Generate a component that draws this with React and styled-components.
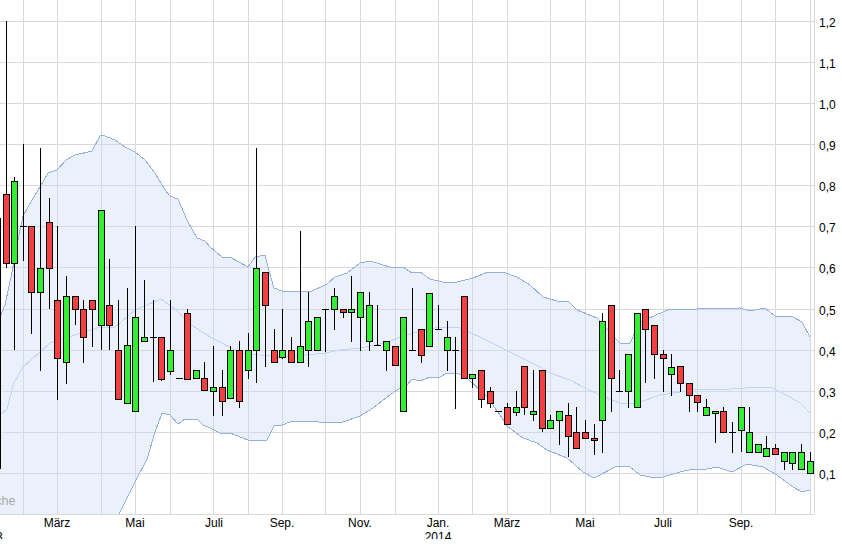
import React from 'react';
import styled, { createGlobalStyle } from 'styled-components';

const GlobalStyle = createGlobalStyle`
  html, body {
    margin: 0;
    padding: 0;
    background: #fff;
    overflow: hidden;
  }
`;

const Page = styled.div`
  width: 842px;
  height: 544px;
  background: #fff;
  overflow: hidden;
`;

const ChartSvg = styled.svg`
  display: block;
  font-family: "Liberation Sans", Arial, sans-serif;
  font-size: 12px;
`;

const GridLine = styled.line`
  stroke: #d9d9d9;
  stroke-width: 1;
  shape-rendering: crispEdges;
`;

const BandFill = styled.path`
  fill: #cddcf5;
  fill-opacity: 0.4;
  stroke: none;
`;

const BandLine = styled.polyline`
  fill: none;
  stroke: ${props => (props.$mid ? '#bed4f8' : '#95afe2')};
  stroke-width: 1;
  shape-rendering: crispEdges;
`;

const Wick = styled.line`
  stroke: #000;
  stroke-width: 1;
  shape-rendering: crispEdges;
`;

const Body = styled.rect`
  fill: ${props => (props.$up ? '#33ee33' : '#f44040')};
  stroke: #000;
  stroke-width: 1;
  shape-rendering: crispEdges;
`;

const AxisLabel = styled.text`
  fill: #000;
`;

const Watermark = styled.text`
  fill: #a8a8a8;
  font-size: 12.5px;
`;

const PLOT_RIGHT = 814;
const PLOT_BOTTOM = 514;

const hLines = [21, 62, 103, 144, 185, 226, 267, 309, 350, 391, 432, 473];
const vLines = [23, 57, 101, 135, 170, 213, 248, 282, 325, 360, 395, 438, 472, 507, 550, 585, 619, 663, 697, 741, 775, 810];

const yLabels = ['1,2', '1,1', '1,0', '0,9', '0,8', '0,7', '0,6', '0,5', '0,4', '0,3', '0,2', '0,1'];

const xLabels = [
  ['März', 57], ['Mai', 135], ['Juli', 214], ['Sep.', 282], ['Nov.', 360],
  ['Jan.', 438], ['März', 507], ['Mai', 585], ['Juli', 663], ['Sep.', 741],
];

const upper = [
  [0, 317], [5, 305], [12, 272], [18, 240], [23, 216], [32, 200], [40, 187], [48, 173], [57, 170], [66, 160],
  [75, 155], [92, 151], [100, 136], [102, 135], [115, 140], [125, 147], [135, 152], [145, 160], [155, 173],
  [165, 190], [170, 196], [178, 199], [187, 220], [197, 238], [205, 241], [210, 247], [222, 257], [230, 257],
  [248, 267], [255, 257], [265, 255], [268, 267], [274, 288], [282, 291], [310, 292], [327, 284], [335, 277],
  [347, 273], [360, 263], [370, 261], [393, 268], [403, 267], [412, 273], [420, 272], [430, 279], [443, 282],
  [457, 282], [473, 278], [488, 272], [503, 272], [517, 277], [530, 285], [543, 297], [557, 301], [568, 301],
  [577, 310], [597, 318], [617, 340], [620, 343], [630, 343], [640, 322], [663, 312], [670, 309], [697, 309],
  [740, 308], [750, 311], [765, 308], [775, 316], [793, 317], [802, 322], [810, 337],
];

const lower = [
  [119, 514], [135, 482], [147, 459], [155, 432], [162, 413], [170, 415], [178, 424], [185, 419], [197, 419],
  [203, 425], [210, 428], [220, 433], [230, 433], [248, 440], [267, 440], [274, 426], [282, 425], [290, 422],
  [310, 421], [327, 423], [343, 422], [360, 416], [373, 408], [387, 397], [397, 390], [407, 385], [412, 379],
  [420, 381], [430, 377], [440, 377], [447, 373], [457, 373], [467, 378], [487, 397], [500, 415], [508, 427],
  [523, 438], [537, 443], [547, 450], [567, 458], [583, 472], [594, 478], [617, 466], [630, 467], [640, 475],
  [650, 477], [663, 477], [680, 472], [693, 469], [707, 469], [717, 467], [732, 472], [747, 464], [763, 467],
  [777, 475], [793, 487], [802, 492], [810, 490],
];

const middle = [
  [0, 415], [7, 409], [13, 385], [23, 367], [40, 352], [50, 343], [75, 335], [100, 327], [115, 327], [135, 310],
  [161, 299], [175, 309], [190, 324], [210, 337], [222, 343], [240, 353], [280, 357], [305, 355], [325, 353],
  [340, 350], [360, 348], [385, 343], [400, 337], [420, 331], [440, 327], [460, 328], [480, 337], [500, 347],
  [520, 357], [540, 367], [550, 373], [570, 380], [585, 388], [600, 395], [620, 403], [630, 404], [640, 402],
  [660, 395], [680, 392], [697, 389], [730, 389], [745, 388], [770, 387], [780, 392], [790, 397], [800, 403],
  [810, 413],
];

// x, wick top, wick bottom, body top, body bottom, up
const candles = [
  [0, 218, 469, null, null],
  [6, 21, 268, 194, 263, false],
  [14, 177, 350, 181, 263, true],
  [23, 144, 260, 226, 226, null],
  [31, 226, 334, 226, 292, false],
  [40, 148, 371, 268, 292, true],
  [49, 198, 309, 222, 268, false],
  [57, 226, 400, 300, 358, false],
  [66, 276, 384, 296, 362, true],
  [75, 296, 325, 296, 309, false],
  [83, 300, 363, 309, 337, false],
  [92, 300, 347, 300, 309, false],
  [101, 210, 350, 210, 325, true],
  [109, 259, 350, 305, 325, false],
  [118, 300, 399, 350, 399, false],
  [127, 288, 403, 345, 403, true],
  [135, 226, 411, 317, 411, true],
  [144, 280, 341, 337, 341, true],
  [153, 300, 381, 337, 337, null],
  [161, 337, 381, 337, 379, false],
  [170, 300, 375, 350, 371, true],
  [179, 378, 378, 378, 378, null],
  [187, 309, 379, 313, 379, false],
  [196, 370, 378, 370, 378, true],
  [204, 362, 390, 378, 390, false],
  [213, 346, 416, 387, 391, true],
  [222, 370, 416, 387, 401, false],
  [230, 346, 398, 350, 398, true],
  [239, 341, 408, 350, 401, false],
  [248, 333, 379, 350, 370, true],
  [256, 148, 383, 268, 350, true],
  [265, 272, 367, 272, 305, false],
  [274, 329, 362, 350, 362, false],
  [282, 309, 359, 350, 357, true],
  [291, 337, 362, 350, 362, false],
  [300, 231, 362, 346, 362, true],
  [308, 292, 367, 321, 350, true],
  [317, 317, 350, 317, 350, true],
  [325, 309, 351, 309, 309, null],
  [334, 288, 330, 296, 309, true],
  [343, 309, 318, 309, 312, false],
  [351, 276, 342, 309, 312, true],
  [360, 292, 351, 292, 317, true],
  [369, 292, 351, 305, 341, true],
  [377, 305, 345, 345, 345, null],
  [386, 341, 371, 341, 350, true],
  [395, 346, 365, 346, 365, false],
  [403, 317, 411, 317, 411, true],
  [412, 288, 350, 350, 350, null],
  [421, 329, 363, 329, 355, false],
  [429, 293, 346, 293, 346, true],
  [438, 305, 329, 329, 329, null],
  [447, 321, 371, 337, 350, true],
  [455, 337, 408, 350, 350, null],
  [464, 296, 378, 296, 378, false],
  [472, 374, 388, 374, 378, true],
  [481, 370, 408, 370, 399, false],
  [490, 387, 408, 391, 403, false],
  [498, 411, 411, 411, 411, null],
  [507, 403, 424, 407, 424, false],
  [516, 391, 416, 407, 412, true],
  [524, 366, 415, 366, 407, false],
  [533, 370, 421, 411, 414, true],
  [542, 370, 432, 370, 428, false],
  [550, 415, 428, 420, 428, true],
  [559, 411, 445, 411, 420, true],
  [568, 403, 457, 415, 436, false],
  [576, 407, 448, 432, 448, false],
  [585, 420, 438, 432, 438, false],
  [594, 424, 455, 438, 440, false],
  [602, 313, 453, 321, 420, true],
  [611, 305, 412, 305, 378, false],
  [619, 370, 391, 391, 391, null],
  [628, 354, 408, 354, 391, true],
  [637, 313, 407, 313, 407, true],
  [645, 309, 383, 309, 329, false],
  [654, 325, 379, 325, 354, false],
  [663, 350, 392, 354, 358, false],
  [671, 354, 396, 367, 374, true],
  [680, 366, 392, 366, 383, false],
  [689, 383, 412, 383, 395, false],
  [697, 395, 412, 395, 402, false],
  [706, 399, 415, 407, 415, true],
  [715, 411, 443, 411, 413, true],
  [723, 407, 432, 411, 432, false],
  [732, 422, 452, 432, 432, null],
  [741, 407, 452, 407, 430, true],
  [749, 407, 452, 432, 452, true],
  [758, 444, 452, 444, 452, true],
  [766, 436, 456, 448, 456, true],
  [775, 444, 454, 448, 454, false],
  [784, 452, 470, 452, 461, true],
  [792, 452, 470, 452, 463, true],
  [801, 444, 469, 452, 469, true],
  [810, 452, 473, 461, 473, true],
];

const pts = list => list.map(p => p.join(',')).join(' ');

// the area closes along the bottom of the plot where the lower band leaves it
const bandPath = () => {
  const top = upper.map(p => p.join(' ')).join(' L ');
  const bottom = [...lower].reverse().map(p => p.join(' ')).join(' L ');
  return `M ${top} L ${bottom} L 0 ${PLOT_BOTTOM} Z`;
};

const Candle = ({ data }) => {
  const [x, hi, lo, top, bottom, up] = data;
  const cx = x + 0.5;
  if (top === null) return <Wick x1={cx} x2={cx} y1={hi} y2={lo} />;
  if (up === null) {
    return (
      <g>
        <Wick x1={cx} x2={cx} y1={hi} y2={lo + 0.5} />
        <Wick x1={x - 3} x2={x + 4} y1={top + 0.5} y2={top + 0.5} />
      </g>
    );
  }
  return (
    <g>
      <Wick x1={cx} x2={cx} y1={hi} y2={lo} />
      <Body $up={up} x={x - 3 + 0.5} y={top + 0.5} width={6} height={bottom - top} />
    </g>
  );
};

// the source image is cut just below the year labels, so the svg stops at 539
const App = () => (
  <Page>
    <GlobalStyle />
    <ChartSvg width="842" height="539" viewBox="0 0 842 539">
      {hLines.map(y => (
        <GridLine key={y} x1="0" x2={PLOT_RIGHT} y1={y + 0.5} y2={y + 0.5} />
      ))}
      {vLines.map(x => (
        <GridLine key={x} x1={x + 0.5} x2={x + 0.5} y1="0" y2={PLOT_BOTTOM} />
      ))}
      <GridLine x1={PLOT_RIGHT + 0.5} x2={PLOT_RIGHT + 0.5} y1="0" y2={PLOT_BOTTOM} />
      <GridLine x1="0" x2={PLOT_RIGHT} y1={PLOT_BOTTOM + 0.5} y2={PLOT_BOTTOM + 0.5} />
      <BandFill d={bandPath()} />
      <Watermark x="15.5" y="505" textAnchor="end">Woche</Watermark>
      <BandLine points={pts(upper)} />
      <BandLine $mid points={pts(middle)} />
      <BandLine points={pts(lower)} />
      {candles.map(c => (
        <Candle key={c[0]} data={c} />
      ))}
      {yLabels.map((label, i) => (
        <AxisLabel key={label} x="819" y={hLines[i] + 6}>{label}</AxisLabel>
      ))}
      {xLabels.map(([label, x]) => (
        <AxisLabel key={x} x={x} y="527" textAnchor="middle">{label}</AxisLabel>
      ))}
      <AxisLabel x="438" y="541" textAnchor="middle">2014</AxisLabel>
      <AxisLabel x="-24" y="541">2013</AxisLabel>
    </ChartSvg>
  </Page>
);

export default App;
